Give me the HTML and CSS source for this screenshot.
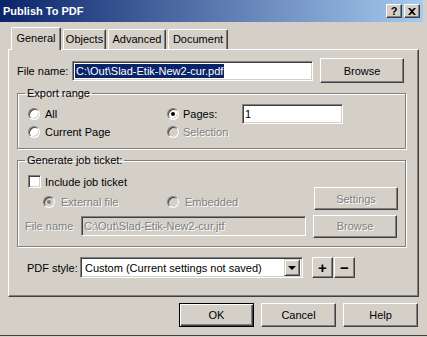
FILE: index.html
```html
<!DOCTYPE html>
<html lang="en">
<head>
  <meta charset="UTF-8">
  <title>Publish To PDF</title>
  <link rel="stylesheet" href="styles.css">
</head>
<body>
  <div class="window">
    <div class="titlebar">
      <span class="title">Publish To PDF</span>
      <span class="cap-btn help">?</span>
      <span class="cap-btn close">
        <svg width="8" height="7" viewBox="0 0 8 7"><path d="M0 0h2l2 2 2-2h2L5 3.5 8 7H6L4 5 2 7H0l3-3.5z" fill="#000"/></svg>
      </span>
    </div>

    <div class="tabs">
      <div class="tab active" style="width:50px">General</div>
      <div class="tab" style="width:43px">Objects</div>
      <div class="tab" style="width:58px">Advanced</div>
      <div class="tab" style="width:60px">Document</div>
    </div>

    <div class="panel">
      <div class="row file-row">
        <span class="label" style="width:55px">File name:</span>
        <div class="field" style="width:241px"><span class="selected">C:\Out\Slad-Etik-New2-cur.pdf</span></div>
        <button class="btn wide">Browse</button>
      </div>

      <fieldset class="group range">
        <legend>Export range</legend>
        <div class="range-grid">
          <label class="opt" style="width:139px"><span class="radio"></span>All</label>
          <label class="opt"><span class="radio checked"></span><span style="width:59px">Pages:</span>
            <span class="field" style="width:101px">1</span></label>
          <label class="opt" style="width:139px"><span class="radio"></span>Current Page</label>
          <label class="opt disabled"><span class="radio"></span>Selection</label>
        </div>
      </fieldset>

      <fieldset class="group ticket">
        <legend>Generate job ticket:</legend>
        <label class="opt check-row"><span class="checkbox"></span>Include job ticket</label>
        <div class="row sub-row">
          <label class="opt disabled" style="width:124px"><span class="radio checked"></span>External file</label>
          <label class="opt disabled"><span class="radio"></span>Embedded</label>
          <button class="btn wide disabled push">Settings</button>
        </div>
        <div class="row file-row2">
          <span class="label disabled" style="width:56px">File name</span>
          <div class="field off" style="width:225px">C:\Out\Slad-Etik-New2-cur.jtf</div>
          <button class="btn wide disabled">Browse</button>
        </div>
      </fieldset>

      <div class="row style-row">
        <span class="label" style="width:53px">PDF style:</span>
        <div class="field select">
          <span class="select-text">Custom (Current settings not saved)</span>
          <span class="select-arrow"></span>
        </div>
        <button class="btn square plus">+</button>
        <button class="btn square">&minus;</button>
      </div>
    </div>

    <div class="footer">
      <button class="btn action default">OK</button>
      <button class="btn action">Cancel</button>
      <button class="btn action">Help</button>
    </div>
  </div>
</body>
</html>
```

FILE: styles.css
```css
body { margin: 0; background: #d4d0c8; font-family: "Liberation Sans", Arial, sans-serif; font-size: 11px; color: #000; }
.window { width: 427px; height: 335px; border-bottom: 1px solid #404040; overflow: hidden; }

.titlebar { display: flex; align-items: center; width: 423px; height: 22px; padding: 0 3px; box-sizing: border-box; background: linear-gradient(to right, #0a246a, #a6caf0); }
.title { flex: 1; color: #fff; font-weight: bold; font-size: 11px; }
.cap-btn { display: flex; align-items: center; justify-content: center; width: 16px; height: 14px; box-sizing: border-box; background: #d4d0c8; border: 1px solid; border-color: #fff #404040 #404040 #fff; box-shadow: inset -1px -1px #808080; font-weight: bold; font-size: 11px; }
.cap-btn.help { margin-right: 2px; }

.tabs { display: flex; align-items: flex-end; height: 22px; margin: 5px 0 0 11px; }
.tab { position: relative; height: 20px; box-sizing: border-box; text-align: center; line-height: 18px; border: 1px solid; border-bottom: none; border-color: #fff #404040 #fff #fff; box-shadow: inset -1px 0 #808080; border-radius: 2px 2px 0 0; margin-right: 2px; }
.tab.active { height: 23px; margin-bottom: -1px; z-index: 1; background: #d4d0c8; line-height: 20px; }

.panel { width: 411px; height: 248px; margin-left: 8px; box-sizing: border-box; padding: 0 8px; border: 1px solid; border-color: #fff #404040 #404040 #fff; box-shadow: inset -1px -1px #808080; }

.row { display: flex; align-items: center; }
.label { flex: none; }
.disabled { color: #808080; text-shadow: 1px 1px 0 #fff; }

.field { display: flex; align-items: center; height: 20px; box-sizing: border-box; padding: 0 2px; background: #fff; border: 1px solid; border-color: #808080 #fff #fff #808080; box-shadow: inset 1px 1px #404040, inset -1px -1px #d4d0c8; white-space: nowrap; overflow: hidden; }
.field.off { background: #d4d0c8; color: #808080; text-shadow: 1px 1px 0 #fff; }
.selected { background: #0a246a; color: #fff; padding: 0 1px; line-height: 14px; }

.btn { flex: none; font: inherit; color: #000; background: #d4d0c8; padding: 0; border: 1px solid; border-color: #fff #404040 #404040 #fff; box-shadow: inset -1px -1px #808080; box-sizing: border-box; }
.btn.wide { width: 84px; height: 23px; }
.btn.disabled { color: #808080; text-shadow: 1px 1px 0 #fff; }
.push { margin-left: auto; }

.file-row { margin-top: 8px; height: 25px; }
.file-row .btn.wide { height: 25px; margin-left: 7px; }

.group { margin: 0; border: 1px solid #808080; box-shadow: inset 1px 1px #fff, 1px 1px 0 #fff; width: 389px; box-sizing: border-box; }
.group legend { padding: 0 2px; line-height: 13px; height: 13px; }
.range { margin-top: 4px; padding: 4px 7px 8px 10px; }
.range legend { margin-left: -3px; }
.range-grid { display: grid; grid-template-columns: 139px auto; grid-template-rows: 20px 16px; }

.opt { display: flex; align-items: center; }
.radio { position: relative; flex: none; width: 12px; height: 12px; box-sizing: border-box; margin-right: 5px; border-radius: 50%; background: #fff; border: 1px solid; border-color: #808080 #fff #fff #808080; box-shadow: inset 1px 1px #404040, inset -1px -1px #d4d0c8; }
.radio.checked::after { content: ""; position: absolute; left: 3px; top: 3px; width: 4px; height: 4px; border-radius: 50%; background: #000; }
.disabled .radio { background: #d4d0c8; }
.disabled .radio.checked::after { background: #808080; }
.range .opt .radio { margin-right: 4px; }
.range-grid .opt:first-child .radio, .range-grid .opt:nth-child(3) .radio { margin-right: 5px; }

.checkbox { flex: none; width: 13px; height: 13px; box-sizing: border-box; margin-right: 4px; background: #fff; border: 1px solid; border-color: #808080 #fff #fff #808080; box-shadow: inset 1px 1px #404040, inset -1px -1px #d4d0c8; }

.ticket { margin-top: 5px; padding: 8px 7px 8px 7px; }
.check-row { height: 13px; margin-left: 3px; }
.sub-row { margin-top: -1px; height: 23px; align-items: flex-end; padding-left: 18px; }
.sub-row .opt { height: 16px; }
.sub-row .opt .radio { margin-right: 6px; }
.file-row2 { margin-top: 4px; height: 24px; }
.file-row2 .btn.wide { margin-left: 7px; }

.style-row { margin: 10px 0 0 10px; height: 21px; }
.select { width: 223px; height: 21px; padding: 0 2px 0 4px; }
.select-text { flex: 1; }
.select-arrow { position: relative; width: 16px; height: 17px; box-sizing: border-box; background: #d4d0c8; border: 1px solid; border-color: #d4d0c8 #404040 #404040 #d4d0c8; box-shadow: inset 1px 1px #fff, inset -1px -1px #808080; }
.select-arrow::after { content: ""; position: absolute; left: 3px; top: 6px; border: 4px solid transparent; border-top: 4px solid #000; border-bottom: none; }
.btn.square { width: 21px; height: 21px; font-size: 15px; font-weight: bold; line-height: 17px; }
.btn.plus { margin: 0 1px 0 9px; }

.footer { display: flex; justify-content: flex-end; gap: 7px; margin-top: 6px; padding-right: 9px; }
.btn.action { width: 75px; height: 24px; }
.btn.default { border: 1px solid #000; box-shadow: inset 1px 1px #fff, inset -1px -1px #404040, inset -2px -2px #808080; }
```
